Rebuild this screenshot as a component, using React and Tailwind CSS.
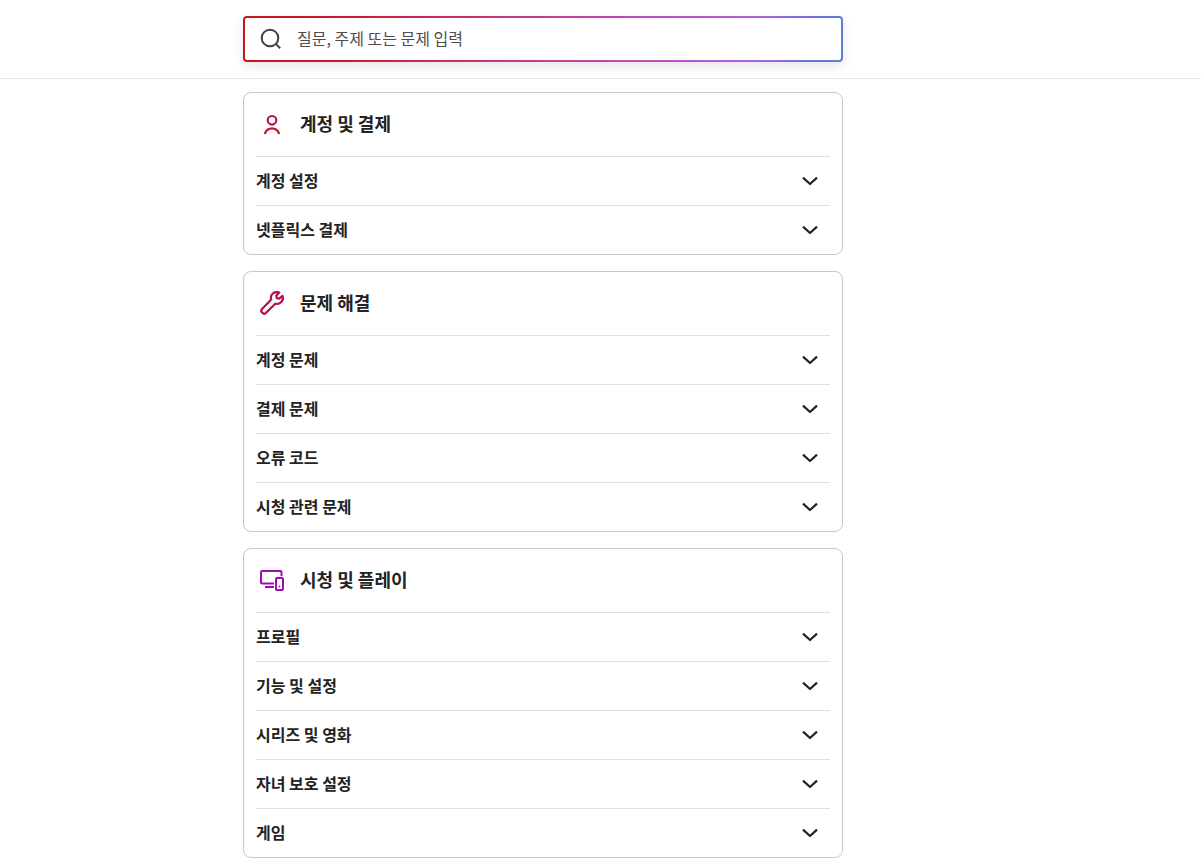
import { useState } from "react";

function AccountIcon() {
  return (
    <svg width="24" height="24" viewBox="0 0 24 24" fill="none" stroke="url(#account-ink)" strokeWidth="2.200" aria-hidden="true">
      <defs>
        <linearGradient id="account-ink" gradientUnits="userSpaceOnUse" x1="12" y1="2" x2="12" y2="22">
          <stop offset="0" stopColor="#b3124f" />
          <stop offset="1" stopColor="#c1162a" />
        </linearGradient>
      </defs>
      <circle cx="12" cy="8.300" r="4.300" />
      <path d="M4.700 22C6 18.400 8.700 16.300 12 16.300s6 2.100 7.300 5.700" />
    </svg>
  );
}

function WrenchIcon() {
  return (
    <svg width="24" height="24" viewBox="0 0 24 24" fill="none" stroke="url(#wrench-ink)" strokeWidth="2.200" strokeLinejoin="round" aria-hidden="true">
      <defs>
        <linearGradient id="wrench-ink" gradientUnits="userSpaceOnUse" x1="12" y1="1" x2="12" y2="23">
          <stop offset="0" stopColor="#b8095c" />
          <stop offset="1" stopColor="#be1048" />
        </linearGradient>
      </defs>
      <path d="M19.200 1.600C16.500.6 13.800 1.200 12.200 3.100c-1.300 1.500-1.600 3.600-1 5.500L1.600 18.600a1.600 1.600 0 0 0 0 2.300l1.500 1.500a1.600 1.600 0 0 0 2.300 0l9.900-9.700c2 .5 4.100.2 5.700-1.400 1.800-1.700 2.400-4.100 1.500-6.500l-3.400 2.900-2.300-.5-.5-2.400z" />
    </svg>
  );
}

function DevicesIcon() {
  return (
    <svg width="24" height="24" viewBox="0 0 24 24" fill="none" stroke="#9b0fb0" strokeWidth="2" strokeLinejoin="round" aria-hidden="true">
      <path d="M21.500 8V4a1 1 0 0 0-1-1H2a1 1 0 0 0-1 1v10.500a1 1 0 0 0 1 1h12M5 19h9" />
      <rect x="16" y="10" width="7" height="12" rx="1" />
      <circle cx="19.500" cy="18.500" r="0.900" fill="#9b0fb0" stroke="none" />
    </svg>
  );
}

function SearchIcon() {
  return (
    <svg className="shrink-0" width="24" height="24" viewBox="0 0 24 24" fill="none" stroke="#414141" strokeWidth="2" aria-hidden="true">
      <circle cx="11" cy="11" r="8.300" />
      <path d="M16.900 16.900l4.300 4.300" />
    </svg>
  );
}

function Chevron({ open }) {
  return (
    <svg className={open ? "rotate-180" : ""} width="16" height="16" viewBox="0 0 16 16" fill="none" stroke="#232323" strokeWidth="2.200" strokeLinejoin="round" aria-hidden="true">
      <path d="M1 4.600L8 11l7-6.400" />
    </svg>
  );
}

const sections = [
  { title: "계정 및 결제", Icon: AccountIcon, topics: ["계정 설정", "넷플릭스 결제"] },
  { title: "문제 해결", Icon: WrenchIcon, topics: ["계정 문제", "결제 문제", "오류 코드", "시청 관련 문제"] },
  {
    title: "시청 및 플레이",
    Icon: DevicesIcon,
    topics: ["프로필", "기능 및 설정", "시리즈 및 영화", "자녀 보호 설정", "게임"],
  },
];

function Topic({ name }) {
  const [open, setOpen] = useState(false);
  return (
    <li className="border-t border-[#e0e0e0]">
      <button
        type="button"
        aria-expanded={open}
        onClick={() => setOpen(!open)}
        className="flex h-12 w-full cursor-pointer items-center justify-between pr-3 text-left text-base font-bold"
      >
        <span className="pb-0.5">{name}</span>
        <Chevron open={open} />
      </button>
    </li>
  );
}

function Section({ title, Icon, topics }) {
  return (
    <section className="rounded-lg border border-[#c8c8c8] px-3">
      <h2 className="flex h-[63px] items-center gap-4 px-1 pb-0.5 text-lg font-bold">
        <Icon />
        <span className="pb-0.5">{title}</span>
      </h2>
      <ul>
        {topics.map((name) => (
          <Topic key={name} name={name} />
        ))}
      </ul>
    </section>
  );
}

export default function App() {
  return (
    <div className="min-h-screen bg-white font-['Noto_Sans_CJK_KR',sans-serif] text-[#232323]">
      <header className="border-b border-[#e5e5e5] py-4 lg:pr-[115px]">
        <form
          role="search"
          onSubmit={(event) => event.preventDefault()}
          className="mx-auto w-full max-w-[600px] rounded-sm bg-[linear-gradient(100deg,#c9131e_0%,#c9182a_15%,#c43a84_45%,#bd50cc_72%,#a862dc_85%,#6a73dc_95%,#5f7fd0_100%)] p-0.5 shadow-[0_4px_12px_rgba(0,0,0,0.1)]"
        >
          <label className="flex h-[42px] items-center gap-3.5 rounded-xs bg-white px-3.5">
            <SearchIcon />
            <input
              type="search"
              aria-label="도움말 검색"
              placeholder="질문, 주제 또는 문제 입력"
              className="h-full w-full min-w-0 bg-transparent pb-0.5 text-base outline-none placeholder:text-[#4d4d4d]"
            />
          </label>
        </form>
      </header>
      <main className="pt-[13px] pb-1 lg:pr-[115px]">
        <div className="mx-auto flex w-full max-w-[600px] flex-col gap-4">
          {sections.map((section) => (
            <Section key={section.title} {...section} />
          ))}
        </div>
      </main>
    </div>
  );
}
